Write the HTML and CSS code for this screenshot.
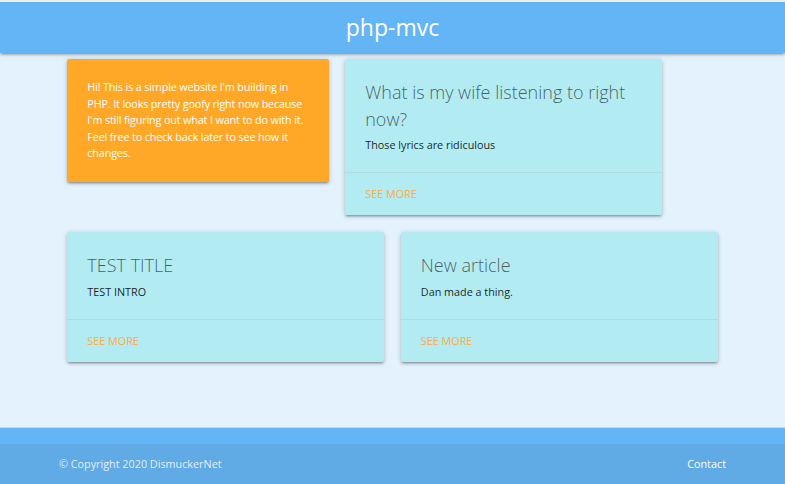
FILE: index.html
```html
<!DOCTYPE html>
<html lang="en">
<head>
<meta charset="utf-8">
<title>php-mvc</title>
<link rel="stylesheet" href="styles.css">
</head>
<body>
<header class="navbar">
  <a class="brand" href="#">php-mvc</a>
</header>
<main class="main">
  <div class="container">
    <div class="row">
      <div class="col col-5">
        <div class="panel">
          Hi! This is a simple website I'm building in PHP. It looks pretty goofy right now because I'm still figuring out what I want to do with it. Feel free to check back later to see how it changes.
        </div>
      </div>
      <div class="col col-6">
        <div class="card">
          <div class="card-content">
            <span class="card-title">What is my wife listening to right now?</span>
            <p>Those lyrics are ridiculous</p>
          </div>
          <div class="card-action"><a href="#">See more</a></div>
        </div>
      </div>
    </div>
    <div class="row">
      <div class="col col-6">
        <div class="card">
          <div class="card-content">
            <span class="card-title">TEST TITLE</span>
            <p>TEST INTRO</p>
          </div>
          <div class="card-action"><a href="#">See more</a></div>
        </div>
      </div>
      <div class="col col-6">
        <div class="card">
          <div class="card-content">
            <span class="card-title">New article</span>
            <p>Dan made a thing.</p>
          </div>
          <div class="card-action"><a href="#">See more</a></div>
        </div>
      </div>
    </div>
  </div>
</main>
<footer class="footer">
  <div class="footer-top"></div>
  <div class="footer-copyright">
    <div class="container footer-inner">
      <span>© Copyright 2020 DismuckerNet</span>
      <a href="#" class="footer-link">Contact</a>
    </div>
  </div>
</footer>
</body>
</html>
```

FILE: styles.css
```css
* { box-sizing: border-box; }

html, body { margin: 0; padding: 0; }

body {
  font-family: "Open Sans", "Noto Sans", sans-serif;
  font-size: 10.8px;
  line-height: 16.6px;
  color: rgba(0, 0, 0, 0.87);
  background: #e3f2fd;
  min-height: 100vh;
  display: flex;
  flex-direction: column;
}

a { text-decoration: none; }

.navbar {
  border-top: 2px solid #eeeeee;
  height: 53px;
  background: #64b5f6;
  display: flex;
  justify-content: center;
  align-items: center;
  box-shadow: 0 2px 2px 0 rgba(0,0,0,0.14), 0 3px 1px -2px rgba(0,0,0,0.12), 0 1px 5px 0 rgba(0,0,0,0.2);
  position: relative;
  z-index: 2;
}

.brand {
  color: #ffffff;
  font-size: 23px;
  line-height: 30px;
  margin-top: -2px;
}

.main {
  flex: 1;
  padding-top: 6px;
}

.container {
  width: 667px;
  margin: 0 auto;
}

.row {
  display: flex;
  align-items: flex-start;
  margin-bottom: 17px;
}

.col { padding: 0 8.33px; }
.col-5 { width: 41.6667%; }
.col-6 { width: 50%; }

.panel {
  background: #ffa726;
  color: #ffffff;
  padding: 20px;
  letter-spacing: -0.15px;
  border-radius: 2px;
  box-shadow: 0 2px 2px 0 rgba(0,0,0,0.14), 0 3px 1px -2px rgba(0,0,0,0.12), 0 1px 5px 0 rgba(0,0,0,0.2);
}

.card {
  background: #b2ebf2;
  border-radius: 2px;
  box-shadow: 0 2px 2px 0 rgba(0,0,0,0.14), 0 3px 1px -2px rgba(0,0,0,0.12), 0 1px 5px 0 rgba(0,0,0,0.2);
}

.card-content {
  padding: 20px 20px 19px;
}

.card-title {
  display: block;
  font-size: 18px;
  font-weight: 300;
  line-height: 26.7px;
  color: rgba(0, 0, 0, 0.62);
  margin-bottom: 5px;
}

.card-content p {
  margin: 0;
  line-height: 16px;
}

.card-action {
  border-top: 1px solid rgba(160, 160, 160, 0.2);
  padding: 13px 20px 13px;
  line-height: 16px;
}

.card-action a {
  color: #ffab40;
  text-transform: uppercase;
}

.footer {
  background: #64b5f6;
  border-top: 1px solid #b3dcfa;
}

.footer-top { height: 16px; }

.footer-copyright {
  background: rgba(51, 51, 51, 0.08);
  height: 40px;
  display: flex;
  align-items: center;
  color: rgba(255, 255, 255, 0.85);
}

.footer-inner {
  display: flex;
  justify-content: space-between;
  align-items: center;
}

.footer-link { color: #ffffff; }
```
